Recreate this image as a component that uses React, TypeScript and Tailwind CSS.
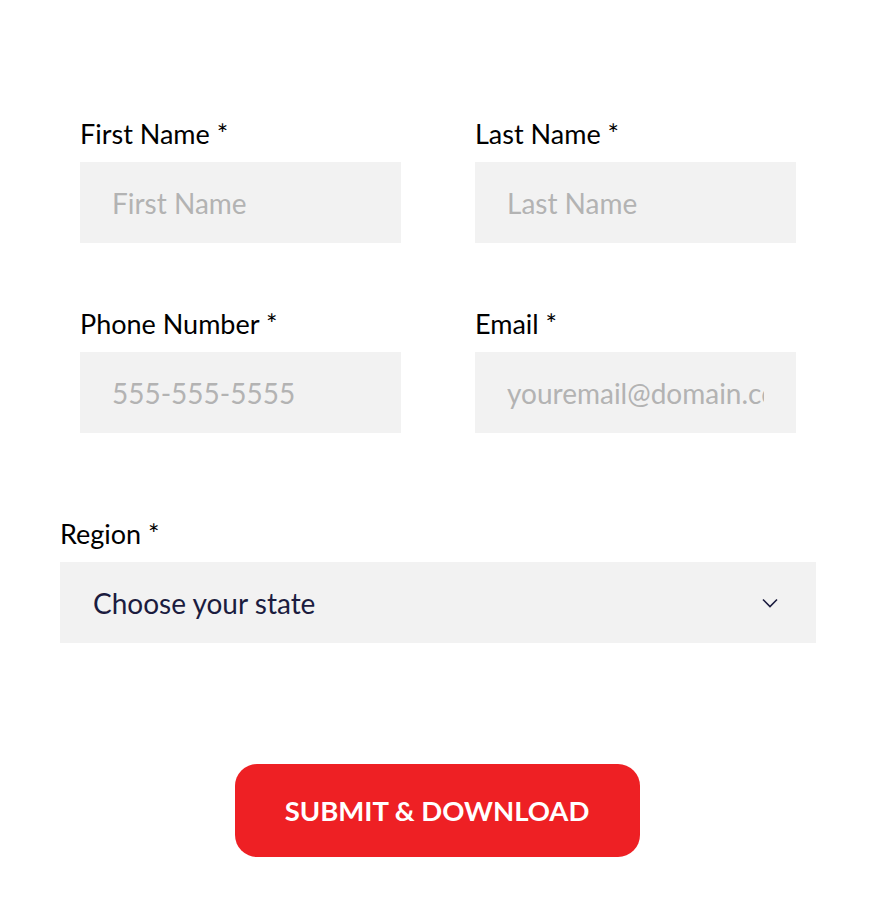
import React from 'react';

const Field: React.FC<{ label: string; placeholder: string }> = ({ label, placeholder }) => (
    <div className="flex flex-col w-[321px]">
        <label className="text-[27px] leading-[28px] text-black mb-[14px]">{label} *</label>
        <input
            placeholder={placeholder}
            className="h-[81px] w-full bg-[#f2f2f2] pl-[32px] pr-[32px] text-[28px] text-[#1b1c3f] placeholder:text-[#b3b3b3] outline-none"
        />
    </div>
);

export default function App() {
    return (
        <div className="w-[878px] h-[918px] bg-white pt-[120px] [font-family:Lato,'Noto_Sans',sans-serif]">
            <div className="px-[80px] flex flex-col gap-[67px]">
                <div className="flex justify-between w-[716px]">
                    <Field label="First Name" placeholder="First Name" />
                    <Field label="Last Name" placeholder="Last Name" />
                </div>
                <div className="flex justify-between w-[716px]">
                    <Field label="Phone Number" placeholder="555-555-5555" />
                    <Field label="Email" placeholder="youremail@domain.com" />
                </div>
            </div>
            <div className="px-[60px] mt-[87px]">
                <label className="block text-[27px] leading-[28px] text-black mb-[14px]">Region *</label>
                <div className="h-[81px] w-[756px] bg-[#f2f2f2] flex items-center justify-between pl-[33px] pr-[38px]">
                    <span className="text-[28px] text-[#1b1c3f]">Choose your state</span>
                    <svg width="16" height="10" viewBox="0 0 16 10" fill="none" stroke="#1b1c3f" strokeWidth="1.6">
                        <path d="M1 1.5 L8 8.5 L15 1.5" />
                    </svg>
                </div>
            </div>
            <div className="flex justify-center mt-[121px]">
                <button className="w-[405px] h-[93px] ml-[-4px] rounded-[22px] bg-[#ee2024] text-white font-bold text-[27.5px] uppercase">
                    Submit &amp; Download
                </button>
            </div>
        </div>
    );
}
